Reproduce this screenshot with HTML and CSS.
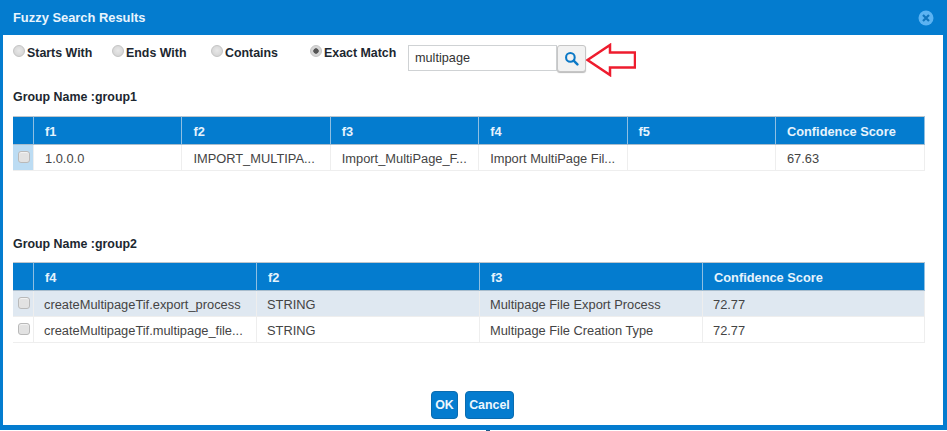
FILE: index.html
```html
<!DOCTYPE html>
<html lang="en">
<head>
<meta charset="utf-8">
<title>Fuzzy Search Results</title>
<link rel="stylesheet" href="styles.css">
</head>
<body>
<div class="dialog">
  <header class="titlebar">
    <h1 class="title">Fuzzy Search Results</h1>
    <svg class="close" viewBox="0 0 16 16" width="16" height="16" aria-label="Close">
      <circle cx="8" cy="8" r="7.5" fill="#5cb3f2"/>
      <path d="M5 5l6 6M11 5l-6 6" stroke="#0f74bd" stroke-width="2.2" fill="none"/>
    </svg>
  </header>
  <main class="content">
    <div class="filters">
      <label class="option"><span class="radio"></span>Starts With</label>
      <label class="option"><span class="radio"></span>Ends With</label>
      <label class="option"><span class="radio"></span>Contains</label>
      <label class="option"><span class="radio radio-on"></span>Exact Match</label>
      <div class="search">
        <div class="search-input">multipage</div>
        <button class="search-btn" type="button" aria-label="Search">
          <svg viewBox="0 0 16 16" width="15" height="15">
            <circle cx="6.8" cy="6.8" r="4.6" fill="none" stroke="#0b78c6" stroke-width="2.2"/>
            <path d="M10.3 10.3l4 4" stroke="#0b78c6" stroke-width="2.6" stroke-linecap="round"/>
          </svg>
        </button>
        <svg class="arrow" viewBox="0 0 50 34" width="50" height="34">
          <path d="M1.500 17L24 2V9.500H49V24.500H24V32Z" fill="#fff" stroke="#ee1c2e" stroke-width="2.500"/>
        </svg>
      </div>
    </div>

    <h2 class="group-name group-one">Group Name :group1</h2>
    <table class="grid grid-one">
      <colgroup><col class="c-check"><col class="c-a"><col class="c-a"><col class="c-a"><col class="c-a"><col class="c-a"><col></colgroup>
      <thead><tr><th></th><th>f1</th><th>f2</th><th>f3</th><th>f4</th><th>f5</th><th>Confidence Score</th></tr></thead>
      <tbody>
        <tr class="row-checked">
          <td class="check-cell"><span class="check"></span></td>
          <td>1.0.0.0</td><td>IMPORT_MULTIPA...</td><td>Import_MultiPage_F...</td><td>Import MultiPage Fil...</td><td></td><td>67.63</td>
        </tr>
      </tbody>
    </table>

    <h2 class="group-name group-two">Group Name :group2</h2>
    <table class="grid grid-two">
      <colgroup><col class="c-check"><col class="c-b"><col class="c-b2"><col class="c-b3"><col></colgroup>
      <thead><tr><th></th><th>f4</th><th>f2</th><th>f3</th><th>Confidence Score</th></tr></thead>
      <tbody>
        <tr class="row-hover">
          <td class="check-cell"><span class="check"></span></td>
          <td>createMultipageTif.export_process</td><td>STRING</td><td>Multipage File Export Process</td><td>72.77</td>
        </tr>
        <tr>
          <td class="check-cell"><span class="check"></span></td>
          <td>createMultipageTif.multipage_file...</td><td>STRING</td><td>Multipage File Creation Type</td><td>72.77</td>
        </tr>
      </tbody>
    </table>

    <div class="actions">
      <button class="btn" type="button">OK</button>
      <button class="btn" type="button">Cancel</button>
    </div>
  </main>
</div>
<span class="edge-tick"></span>
</body>
</html>
```
FILE: styles.css
```css
* { box-sizing: border-box; }
html, body { margin: 0; padding: 0; background: #fff; }
body { width: 947px; height: 431px; overflow: hidden; position: relative; font-family: "Liberation Sans", Arial, sans-serif; }
.dialog { height: 430px; border: solid #047ccf; border-width: 0 4px 5px 3px; display: flex; flex-direction: column; }
.titlebar { height: 35px; background: #047ccf; display: flex; align-items: center; justify-content: space-between; flex: none; margin: 0 -4px 0 -3px; padding: 0 13px; }
.title { margin: 0; font-size: 12.900px; font-weight: bold; color: #e8f4fd; }
.close { display: block; }
.content { flex: 1; padding: 0 18px 0 10px; display: flex; flex-direction: column; min-height: 0; }
.filters { display: flex; height: 41px; padding-top: 9px; flex: none; }
.option { width: 99px; display: flex; align-items: flex-start; font-size: 12.400px; font-weight: bold; color: #1c2730; line-height: 19px; height: 19px; }
.radio { width: 12px; height: 12px; border-radius: 50%; background: radial-gradient(circle at 50% 45%, #e8e8e8 0, #cfcfcf 100%); border: 1px solid #c4c4c4; margin: 1px 2px 0 0; flex: none; }
.radio-on { background: radial-gradient(circle, #555 0, #555 2.400px, #d6d6d6 3px); }
.search { display: flex; align-items: flex-start; margin-left: -1px; margin-top: 1px; }
.search-input { width: 149px; height: 26px; border: 1px solid #cfd2d4; font-size: 12.700px; line-height: 25px; padding: 0 6px; color: #333; }
.search-btn { width: 29px; height: 27px; padding: 0; background: #f2f2f2; border: 1px solid #c6c6c6; border-radius: 3px; display: flex; align-items: center; justify-content: center; box-shadow: 0 1px 1px #bbb; }
.arrow { display: block; margin-top: -2px; }
.group-name { margin: 0; font-size: 12.400px; font-weight: bold; color: #1c2730; line-height: 14px; flex: none; }
.group-one { margin-top: 14px; }
.group-two { margin-top: 66px; }
.grid { border-collapse: separate; border-spacing: 0; table-layout: fixed; flex: none; width: 912px; }
.grid-one { margin-top: 12px; }
.grid-two { margin-top: 11px; }
.c-check { width: 21px; }
.c-a { width: 148.400px; }
.c-b { width: 223px; }
.c-b2 { width: 223px; }
.c-b3 { width: 223px; }
.grid th { height: 29px; background: #047ccf; border-top: 1px solid #bfc6cc; border-bottom: 1px solid #a9bdcd; border-right: 1px solid #8fbfe2; color: #e6f3fc; font-size: 12.800px; font-weight: bold; text-align: left; padding: 1px 10px 0 11px; }
.grid td { height: 26px; border-bottom: 1px solid #eeeeee; border-right: 1px solid #eeeeee; font-size: 12.850px; color: #444; padding: 1px 10px 0; white-space: nowrap; overflow: hidden; }
.grid-one td { padding-left: 11px; }
.grid td.check-cell { padding: 0 0 0 5px; }
.row-checked .check-cell { background: #bcdcf3; }
.row-hover td { background: #dfe8f1; }
.check { display: block; width: 12px; height: 12px; background: #e2e2e2; border: 1px solid #b9b9b9; border-radius: 3px; box-shadow: inset 0 1px 1px #f4f4f4; margin-bottom: 1px; }
.actions { display: flex; justify-content: center; gap: 7px; margin-top: 48px; padding-left: 7px; flex: none; }
.btn { height: 28px; padding: 0; width: 27px; background: #047ccf; border: 1px solid #0a6cb0; border-radius: 4px; color: #eef7fd; font: bold 12.400px "Liberation Sans", Arial, sans-serif; }
.btn + .btn { width: 49px; }
.edge-tick { position: absolute; left: 486px; top: 430px; width: 4px; height: 1px; background: #1a5a8a; }
```
